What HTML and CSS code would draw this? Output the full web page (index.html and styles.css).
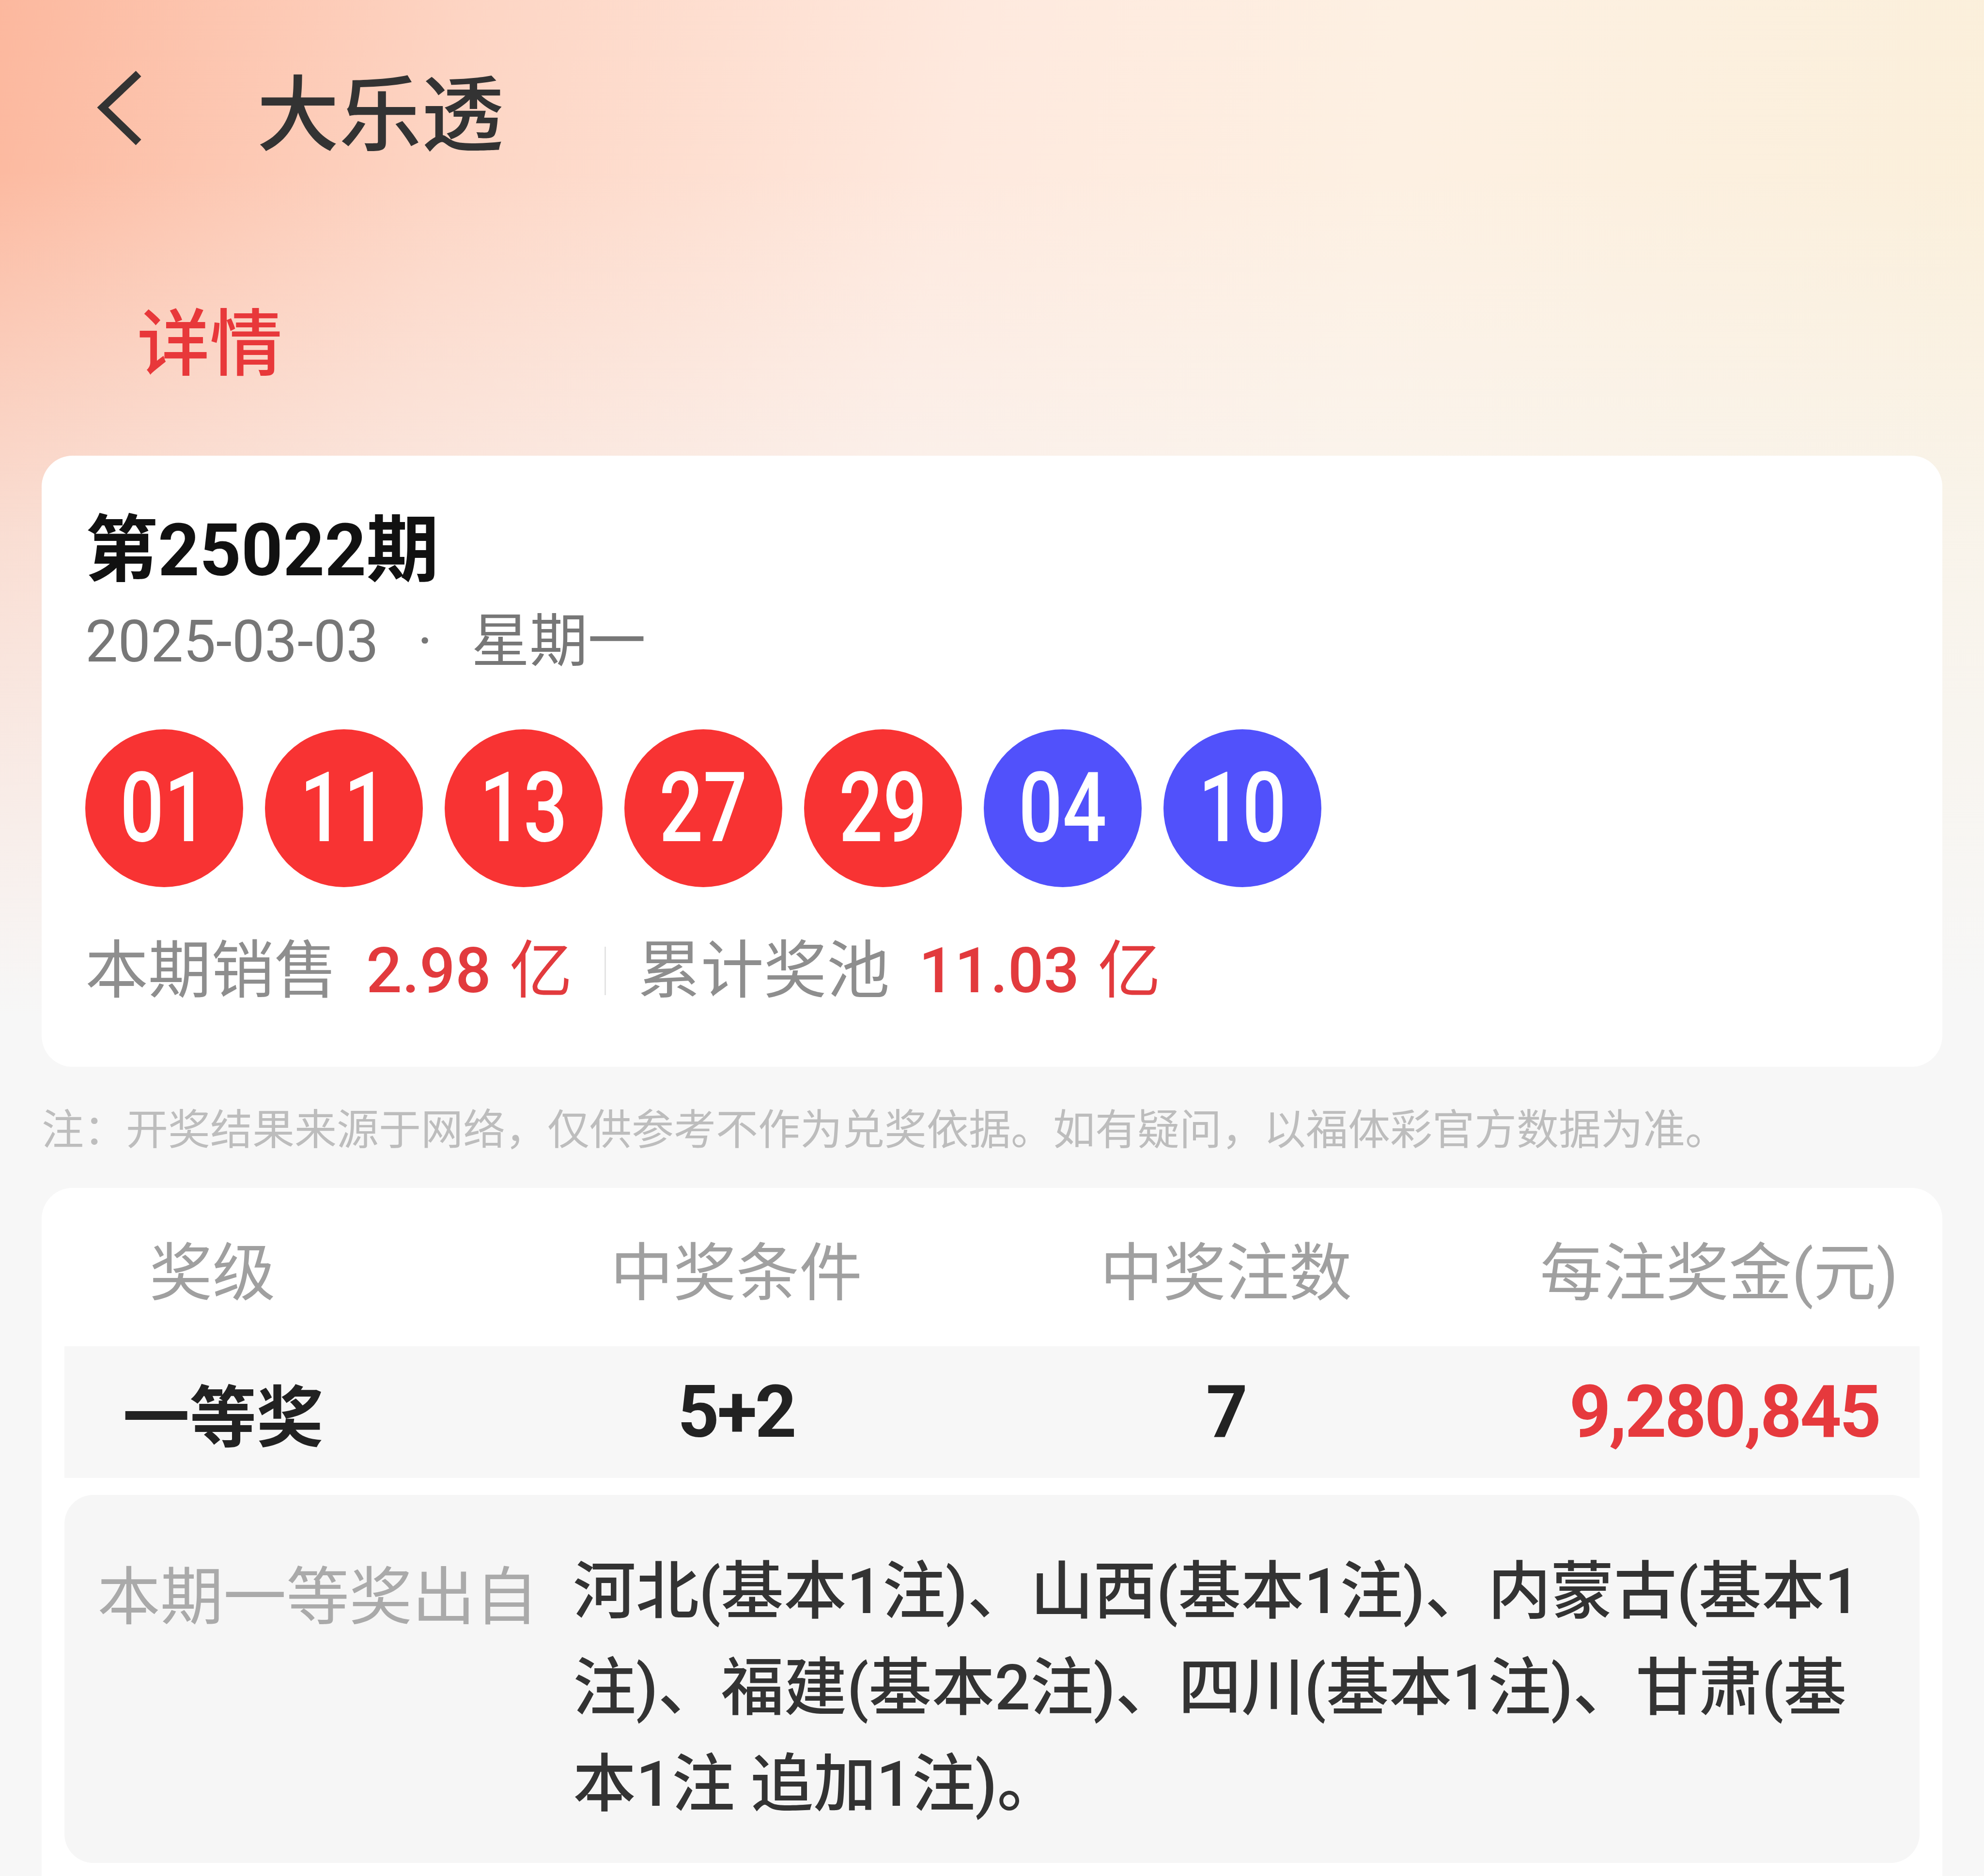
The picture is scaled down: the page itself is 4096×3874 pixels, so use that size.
FILE: index.html
```html
<!DOCTYPE html>
<html lang="zh-CN">
<head>
  <meta charset="UTF-8" />
  <meta name="viewport" content="width=device-width, initial-scale=1.0" />
  <title>大乐透 详情</title>
  <link rel="stylesheet" href="styles.css">
</head>
<body>
  <div class="page">
    <header class="topbar">
      <svg class="back" viewBox="0 0 100 160" width="100" height="160">
        <path d="M86 8 L12 78 L86 150" fill="none" stroke="#333" stroke-width="16" />
      </svg>
      <h1 class="title">大乐透</h1>
    </header>

    <div class="tab">详情</div>

    <section class="card draw">
      <div class="issue">第25022期</div>
      <div class="date">
        <span>2025-03-03</span><span class="dot">·</span><span>星期一</span>
      </div>
      <div class="balls">
        <span class="ball red"><b>01</b></span>
        <span class="ball red"><b>11</b></span>
        <span class="ball red"><b>13</b></span>
        <span class="ball red"><b>27</b></span>
        <span class="ball red"><b>29</b></span>
        <span class="ball blue"><b>04</b></span>
        <span class="ball blue"><b>10</b></span>
      </div>
      <div class="stats">
        <span class="stat-label">本期销售</span>
        <span class="stat-num">2.98</span>
        <span class="stat-unit">亿</span>
        <span class="divider"></span>
        <span class="stat-label">累计奖池</span>
        <span class="stat-num">11.03</span>
        <span class="stat-unit">亿</span>
      </div>
    </section>

    <p class="note">注：开奖结果来源于网络，仅供参考不作为兑奖依据。如有疑问，以福体彩官方数据为准。</p>

    <section class="card prizes">
      <div class="prize-head">
        <span class="first">奖级</span>
        <span>中奖条件</span>
        <span>中奖注数</span>
        <span class="money">每注奖金(元)</span>
      </div>
      <div class="prize-row">
        <span class="level">一等奖</span>
        <span class="num">5+2</span>
        <span class="num">7</span>
        <span class="num money">9,280,845</span>
      </div>
      <div class="winners">
        <div class="winners-label">本期一等奖出自</div>
        <div class="winners-list">河北(基本1注)、山西(基本1注)、内蒙古(基本1注)、福建(基本2注)、四川(基本1注)、甘肃(基本1注 追加1注)。</div>
      </div>
    </section>
  </div>
</body>
</html>
```

FILE: styles.css
```css
body {
  margin: 0;
  font-family: Roboto, "Noto Sans CJK SC", sans-serif;
  background: #f7f7f7;
}

.page {
  box-sizing: border-box;
  width: 4096px;
  height: 3874px;
  overflow: hidden;
  padding: 0 86px;
  background-color: #f7f7f7;
  background-image:
    linear-gradient(180deg, rgba(247,247,247,0) 0, rgba(247,247,247,0) 350px, rgba(247,247,247,.55) 1100px, #f7f7f7 2100px),
    linear-gradient(100deg, #fcb89e 0%, #fdd5c4 22%, #fee9de 45%, #fdf0e2 65%, #faefd9 100%);
  background-size: 100% 2300px;
  background-repeat: no-repeat;
}

.topbar {
  display: flex;
  align-items: center;
  height: 448px;
  padding-left: 114px;
}

.back {
  display: block;
}

.title {
  margin: 0 0 0 230px;
  font-family: "Noto Sans CJK SC", sans-serif;
  font-size: 170px;
  font-weight: 500;
  line-height: 200px;
  color: #333;
}

.tab {
  margin: 150px 0 0 197px;
  font-family: "Noto Sans CJK SC", sans-serif;
  font-size: 150px;
  font-weight: 500;
  line-height: 200px;
  color: #e8383a;
}

.card {
  background: #fff;
  border-radius: 64px;
}

.draw {
  margin-top: 143px;
  padding: 103px 90px 108px;
}

.issue {
  font-size: 150px;
  font-weight: 700;
  line-height: 186px;
  color: #111;
}

.date {
  padding-top: 10px;
  font-size: 120px;
  line-height: 170px;
  color: #777;
}

.date .dot {
  margin: 0 80px;
}

.balls {
  display: flex;
  gap: 45px;
  margin-top: 96px;
}

.ball {
  display: flex;
  align-items: center;
  justify-content: center;
  width: 326px;
  height: 326px;
  border-radius: 50%;
  color: #fff;
}

.ball b {
  display: inline-block;
  font-size: 200px;
  font-weight: 500;
  line-height: 1;
  transform: scaleX(.8);
}

.ball.red { background: #f83333; }
.ball.blue { background: #5151fb; }

.stats {
  display: flex;
  align-items: center;
  margin-top: 73px;
  padding-top: 10px;
  font-size: 130px;
  line-height: 180px;
}

.stat-label {
  color: #8e8e8e;
}

.stat-num {
  margin-left: 60px;
  font-size: 130px;
  font-weight: 500;
  color: #e23a3d;
}

.stat-unit {
  margin-left: 38px;
  color: #e23a3d;
}

.divider {
  width: 3px;
  height: 100px;
  margin: 0 66px;
  background: #e4e4e4;
}

.note {
  margin: 63px 0 67px;
  font-family: "Noto Sans CJK SC", sans-serif;
  font-size: 87px;
  line-height: 120px;
  color: #bdbdbd;
}

.prizes {
  padding: 0 47px 200px;
}

.prize-head, .prize-row {
  display: grid;
  grid-template-columns: 655px 1464px 558px 1fr;
  align-items: center;
  justify-items: center;
  white-space: nowrap;
}

.prize-head {
  height: 327px;
  font-size: 130px;
  color: #a0a0a0;
}

.prize-head .first {
  padding-right: 44px;
}

.prize-head .money {
  justify-self: end;
  padding-right: 44px;
}

.prize-row {
  height: 272px;
  background: #f7f7f7;
}

.level {
  font-family: "Noto Sans CJK SC", sans-serif;
  font-size: 138px;
  font-weight: 700;
  color: #222;
}

.num {
  font-size: 150px;
  font-weight: 700;
  letter-spacing: -4px;
  color: #222;
}

.prize-row .money {
  justify-self: end;
  padding-right: 83px;
  color: #e6393d;
}

.winners {
  display: flex;
  align-items: flex-start;
  margin-top: 35px;
  padding: 100px 90px 63px 68px;
  background: #f6f6f6;
  border-radius: 60px;
  font-size: 130px;
  line-height: 199px;
}

.winners-label {
  flex: none;
  margin-right: 72px;
  font-family: "Noto Sans CJK SC", sans-serif;
  color: #aaa;
}

.winners-list {
  font-weight: 500;
  color: #333;
}
```
